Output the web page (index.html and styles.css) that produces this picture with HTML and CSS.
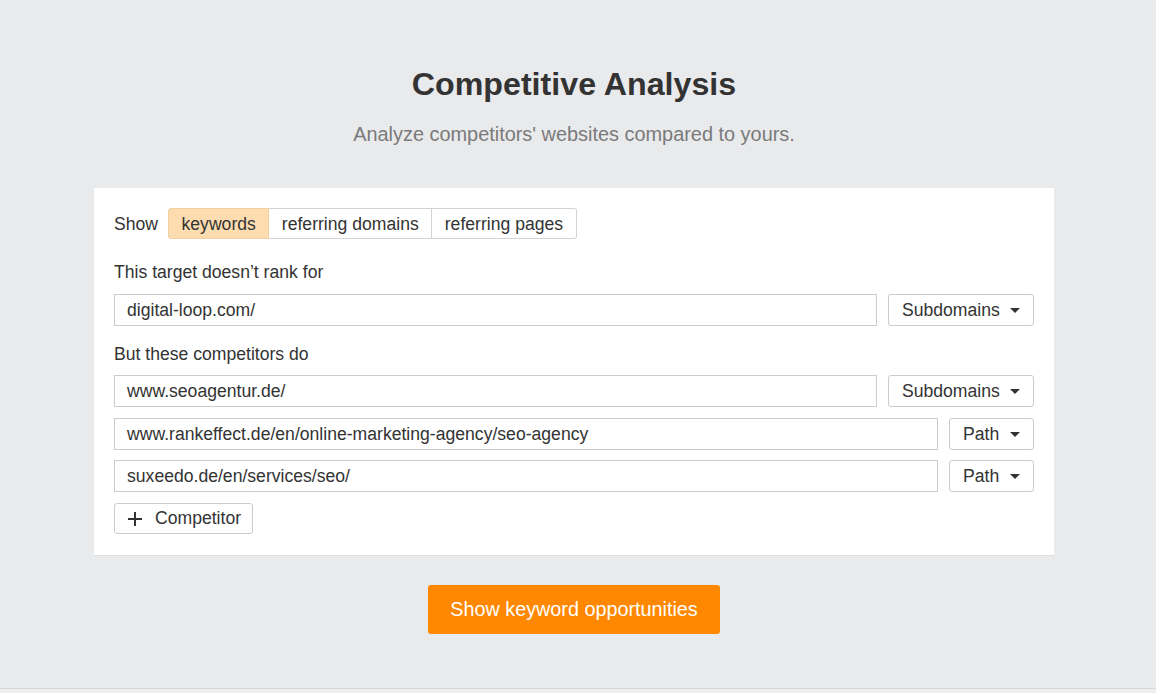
FILE: index.html
```html
<!DOCTYPE html>
<html lang="en">
<head>
<meta charset="utf-8">
<title>Competitive Analysis</title>
<link rel="stylesheet" href="styles.css">
</head>
<body>
<main class="page">
  <h1 class="title">Competitive Analysis</h1>
  <p class="subtitle">Analyze competitors' websites compared to yours.</p>

  <section class="card">
    <div class="show-row">
      <span class="show-label">Show</span>
      <div class="segmented">
        <button class="seg seg-active">keywords</button>
        <button class="seg">referring domains</button>
        <button class="seg">referring pages</button>
      </div>
    </div>

    <div class="label label-first">This target doesn’t rank for</div>
    <div class="field-row">
      <div class="input">digital-loop.com/</div>
      <button class="select select-wide">Subdomains <span class="caret"></span></button>
    </div>

    <div class="label">But these competitors do</div>
    <div class="field-list">
      <div class="field-row">
        <div class="input">www.seoagentur.de/</div>
        <button class="select select-wide">Subdomains <span class="caret"></span></button>
      </div>
      <div class="field-row">
        <div class="input">www.rankeffect.de/en/online-marketing-agency/seo-agency</div>
        <button class="select select-narrow">Path <span class="caret"></span></button>
      </div>
      <div class="field-row">
        <div class="input">suxeedo.de/en/services/seo/</div>
        <button class="select select-narrow">Path <span class="caret"></span></button>
      </div>
    </div>

    <button class="add-btn">
      <svg class="plus" width="16" height="16" viewBox="0 0 16 16" aria-hidden="true">
        <rect x="7" y="1" width="2" height="14" fill="#333"/>
        <rect x="1" y="7" width="14" height="2" fill="#333"/>
      </svg>
      <span>Competitor</span>
    </button>
  </section>

  <div class="actions">
    <button class="primary">Show keyword opportunities</button>
  </div>
</main>
<div class="footer-line"></div>
</body>
</html>
```

FILE: styles.css
```css
* { box-sizing: border-box; }

html, body {
  margin: 0;
  padding: 0;
}

body {
  background: #e9eaec;
  font-family: "Liberation Sans", Arial, sans-serif;
  color: #333;
  font-size: 17.6px;
  height: 693px;
  overflow: hidden;
}

.page {
  width: 960px;
  margin-left: calc(50% - 484px);
  padding-top: 66px;
  height: 688px;
}

.title {
  margin: 0;
  text-align: center;
  font-size: 32.2px;
  line-height: 36px;
  font-weight: bold;
  color: #333;
}

.subtitle {
  margin: 20px 0 0;
  text-align: center;
  font-size: 19.9px;
  line-height: 24px;
  color: #7a7a7a;
}

.card {
  margin-top: 42px;
  background: #fff;
  padding: 20px 20px 21px;
  border-bottom: 1px solid #dcdddf;
}

.show-row {
  display: flex;
  align-items: center;
  gap: 10px;
}

.show-label {
  line-height: 20px;
  margin-top: 1px;
}

.segmented {
  display: flex;
}

button {
  font-family: inherit;
  font-size: inherit;
  color: #333;
  cursor: pointer;
}

.seg {
  height: 31px;
  padding: 1px 12.5px 0;
  background: #fff;
  border: 1px solid #d3d3d3;
  border-left: none;
  line-height: 28px;
}

.seg:first-child {
  border-left: 1px solid #f0cfa3;
  border-radius: 3px 0 0 3px;
}

.seg:last-child {
  border-radius: 0 3px 3px 0;
}

.seg-active {
  background: #fddcb0;
  border-color: #f0cfa3;
}

.label {
  line-height: 20px;
  margin: 18px 0 11px;
}

.label-first {
  margin-top: 23px;
  margin-bottom: 12px;
}

.field-list {
  display: flex;
  flex-direction: column;
  gap: 10.5px;
}

.field-row {
  display: flex;
  gap: 11px;
}

.input {
  flex: 1;
  height: 32px;
  border: 1px solid #ccc;
  padding: 0 12px;
  line-height: 30px;
  background: #fff;
  white-space: nowrap;
  overflow: hidden;
}

.select {
  height: 32px;
  background: #fff;
  border: 1px solid #ccc;
  border-radius: 3px;
  padding: 0 13px 0 13px;
  display: flex;
  align-items: center;
  justify-content: space-between;
  gap: 9px;
  line-height: 30px;
}

.select-wide { width: 146px; }
.select-narrow { width: 85px; }

.caret {
  width: 0;
  height: 0;
  border-left: 5px solid transparent;
  border-right: 5px solid transparent;
  border-top: 5px solid #333;
  margin-top: 1px;
}

.add-btn {
  margin-top: 11px;
  height: 31px;
  width: 139px;
  padding: 0 12px;
  background: #fff;
  border: 1px solid #ccc;
  border-radius: 3px;
  display: flex;
  align-items: center;
  gap: 12px;
  line-height: 29px;
}

.plus { flex: none; }

.actions {
  margin-top: 29px;
  display: flex;
  justify-content: center;
}

.primary {
  height: 49px;
  padding: 0 22px;
  background: #ff8800;
  border: none;
  border-radius: 3px;
  color: #fff;
  font-size: 19.8px;
}

.footer-line {
  height: 5px;
  border-top: 1px solid #d6d7d9;
  background: #eeeff1;
}
```
